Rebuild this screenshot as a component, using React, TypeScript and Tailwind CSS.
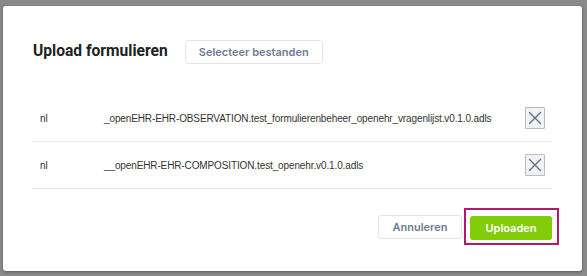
import React from "react";

const files = [
  { lang: "nl", name: "_openEHR-EHR-OBSERVATION.test_formulierenbeheer_openehr_vragenlijst.v0.1.0.adls" },
  { lang: "nl", name: "__openEHR-EHR-COMPOSITION.test_openehr.v0.1.0.adls" },
];

function XIcon() {
  return (
    <svg width="14" height="14" viewBox="0 0 14 14" fill="none">
      <path d="M1.5 1.5 L12.5 12.5 M12.5 1.5 L1.5 12.5" stroke="#5f7089" strokeWidth="1.4" strokeLinecap="round" />
    </svg>
  );
}

export default function App() {
  return (
    <div className="w-[587px] h-[276px] bg-[#8a8a8a] pt-[6px] pl-[3px] pr-[5px] pb-[5px] overflow-hidden">
      <div className="h-full bg-white rounded-[3px] shadow-[0_1px_3px_rgba(0,0,0,0.35)] pl-[29px] pr-[30px] pt-[34px] flex flex-col">
        <div className="flex items-center h-[24px]">
          <h1 className="text-[15.6px] font-bold text-[#222] font-['Roboto',sans-serif] pl-[1px]">
            Upload formulieren
          </h1>
          <button className="ml-[17px] w-[138px] h-[24px] border border-[#e3e6ea] rounded-[3px] bg-white text-[11px] font-semibold text-[#6d7c96] font-['Inter',sans-serif]">
            Selecteer bestanden
          </button>
        </div>

        <div className="mt-[31px]">
          {files.map((f, i) => (
            <div
              key={i}
              className="h-[47px] flex items-center border-b border-[#e6e8ec] pl-[8px] pr-[7px] font-['Liberation_Sans',Arial,sans-serif] text-[10px] tracking-[-0.12px] text-[#333]"
            >
              <span className="w-[64px]">{f.lang}</span>
              <span className="flex-1">{f.name}</span>
              <span className="w-[20px] h-[22px] flex items-center justify-center border border-[#b9bcc0] bg-[#f1f2f3] rounded-[1px]">
                <XIcon />
              </span>
            </div>
          ))}
        </div>

        <div className="flex justify-end items-center mt-[25px] gap-[8px]">
          <button className="w-[84px] h-[24px] border border-[#e3e6ea] rounded-[3px] bg-white text-[11px] font-semibold text-[#6d7c96] font-['Inter',sans-serif]">
            Annuleren
          </button>
          <div className="relative">
            <button className="w-[82px] h-[24px] rounded-[3px] bg-[#83cc0a] text-[11px] font-semibold text-white font-['Inter',sans-serif]">
              Uploaden
            </button>
            <span className="absolute -left-[6px] -top-[6px] -right-[7px] -bottom-[5px] border-2 border-[#b2186b] pointer-events-none" />
          </div>
        </div>
      </div>
    </div>
  );
}
